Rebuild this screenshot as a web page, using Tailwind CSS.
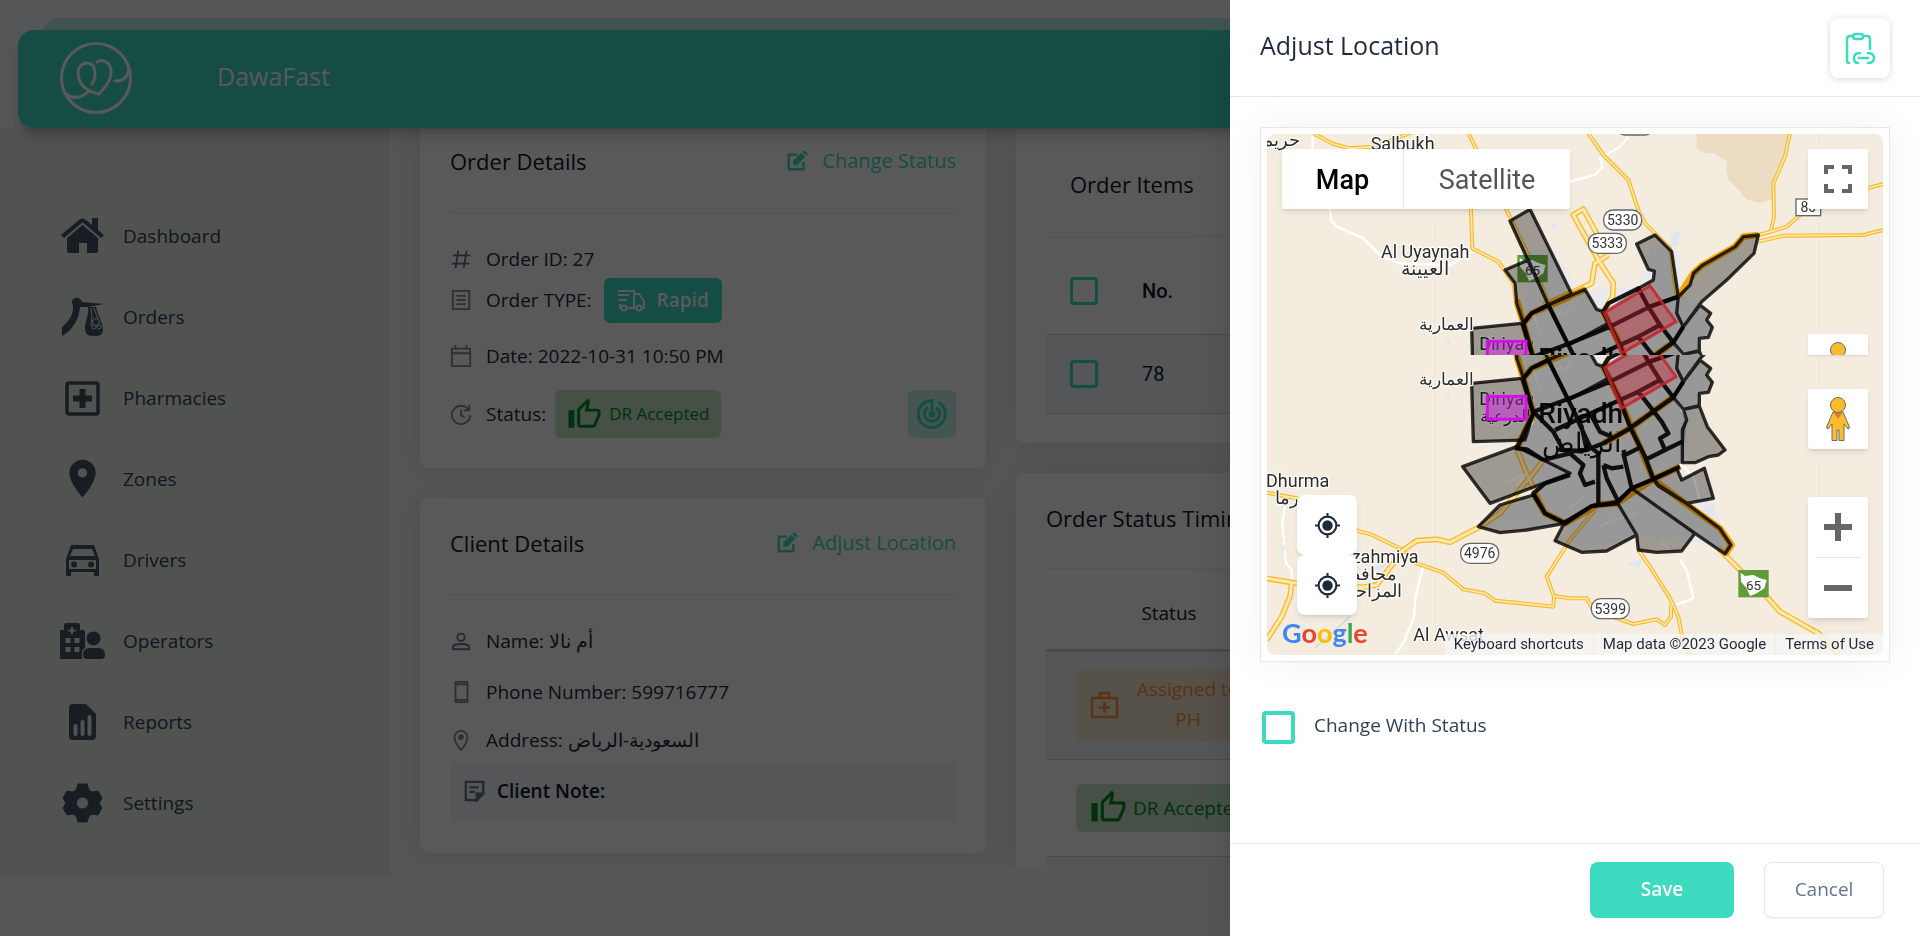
<!DOCTYPE html>
<html lang="en">
<head>
  <meta charset="UTF-8">
  <meta name="viewport" content="width=device-width, initial-scale=1">
  <title>DawaFast – Adjust Location</title>
  <script src="https://cdn.jsdelivr.net/npm/@tailwindcss/browser@4"></script>
</head>
<body class="relative h-screen overflow-hidden bg-slate-100 font-['Open_Sans','Noto_Sans',sans-serif] text-[19px] leading-6 text-slate-800">

  <!-- Shared icons -->
  <svg class="hidden">
    <symbol id="edit" viewBox="0 0 24 24"><path d="M19 13v8H3V5h9" fill="none" stroke="currentColor" stroke-width="2.6" stroke-linejoin="round"/><path d="M8 16v-4.500l8.600-8.600 4.500 4.500L12.500 16zM17.800 1.800l1-1a1.200 1.200 0 0 1 1.700 0l2.700 2.700a1.200 1.200 0 0 1 0 1.700l-1 1z" fill="currentColor"/></symbol>
    <symbol id="thumb" viewBox="0 0 24 24"><path fill="currentColor" d="M5 9v12H1V9h4m4 12a2 2 0 0 1-2-2V9c0-.55.22-1.050.59-1.410L14.170 1l1.060 1.060c.27.27.44.65.44 1.050l-.03.32L14.690 8H21a2 2 0 0 1 2 2v2c0 .26-.05.5-.14.73l-3.020 7.050C19.540 20.500 18.830 21 18 21H9m0-2h9.030L21 12v-2h-8.790l1.130-5.320L9 9.030V19Z"/></symbol>
    <symbol id="gps" viewBox="0 0 24 24"><path fill="none" stroke="currentColor" stroke-width="2" d="M12 3.500a8.500 8.500 0 1 0 0 17 8.500 8.500 0 0 0 0-17M12 0v4M12 20v4M0 12h4M20 12h4"/><circle cx="12" cy="12" r="5" fill="currentColor"/></symbol>
    <symbol id="pegman" viewBox="0 0 24 44"><path d="M7 15 1 29q-1 3 1 3l4-5v16.500h5V33h2v10.500h5V27l4 5q2 0 1-3L17 15z" fill="#fbbc2c" stroke="#6b6b6b"/><path d="M7.500 15.500h9L12 22z" fill="#e37a2b"/><circle cx="12" cy="8" r="7.500" fill="#fbbc2c" stroke="#6b6b6b"/></symbol>
  </svg>

  <!-- Header -->
  <div class="absolute left-[43px] right-[43px] top-[18px] h-20 rounded-2xl bg-[#3cdbc0]/30"></div>
  <header class="relative z-10 ml-[18px] mr-[18px] mt-[30px] flex h-[98px] items-center rounded-2xl bg-[#3cdbc0] pb-[3px] pl-[42px] shadow-lg shadow-black/20">
    <svg class="h-[73px] w-[73px]" viewBox="0 0 73 73" fill="none" stroke="#fff" stroke-width="3" stroke-linecap="round">
      <circle cx="36" cy="37" r="34.500"/>
      <path d="M32 43c5-8 4-21-5-21-12 0-12 19 1 27 4 3 7 3 11 4 6-7 13-14 12-24-1-9-10-11-14-8M29 49c-6 9-16 9-23 4M55 40c8 1 14-5 14-14"/>
    </svg>
    <h1 class="ml-[84px] pb-1 text-[25px] font-medium leading-8 text-white">DawaFast</h1>
  </header>

  <div class="flex">
    <!-- Sidebar -->
    <nav class="h-[748px] w-[390px] shrink-0 bg-[#e7ede7] pl-[60px] pt-[67px] text-slate-700">
      <a href="#" class="flex h-[81px] items-center gap-[18px]">
        <svg class="h-[45px] w-[45px]" viewBox="0 0 45 45" fill="#475569"><path d="M1 22 19 7q3.500-3 7 0l6 5V5h6v12l6 5-3 3L23.500 10q-1-1-2 0L4 25zM7 25 22.500 12 38 25v13q0 2-2 2h-9V30h-8v10h-9q-3 0-3-2z"/></svg>
        Dashboard
      </a>
      <a href="#" class="flex h-[81px] items-center gap-[18px]">
        <svg class="h-[45px] w-[45px]" viewBox="0 0 45 45" fill="#475569"><path d="M2 33C10 27 14 18 13 12q-3-6 2-8 5-1 7 4l22 2-16 3h-8C19 25 13 36 2 42zM28 13h8c2 9 7 16 7 24-1 5-5 5-10 5-6 0-8-3-8-8 0-7 4-12 3-21z"/><path d="M31 14q2 8 0 18M34 14l5 14" stroke="#e7ede7" fill="none"/><circle cx="36" cy="28" r="3.500" stroke="#e7ede7"/><circle cx="34" cy="33" r="2" stroke="#e7ede7"/><circle cx="39" cy="33" r="2" stroke="#e7ede7"/></svg>
        Orders
      </a>
      <a href="#" class="flex h-[81px] items-center gap-[18px]">
        <svg class="h-[45px] w-[45px]" viewBox="0 0 45 45"><rect x="7" y="8" width="31" height="31" rx="2" fill="none" stroke="#475569" stroke-width="3.500"/><path d="M13 23.500h19M22.500 14v19" stroke="#475569" stroke-width="6"/></svg>
        Pharmacies
      </a>
      <a href="#" class="flex h-[81px] items-center gap-[18px]">
        <svg class="h-[45px] w-[45px]" viewBox="0 0 24 24" fill="#475569"><path d="M12 11.500A2.500 2.500 0 0 1 9.500 9 2.500 2.500 0 0 1 12 6.500 2.500 2.500 0 0 1 14.500 9a2.500 2.500 0 0 1-2.500 2.500M12 2a7 7 0 0 0-7 7c0 5.250 7 13 7 13s7-7.750 7-13a7 7 0 0 0-7-7Z"/></svg>
        Zones
      </a>
      <a href="#" class="flex h-[81px] items-center gap-[18px]">
        <svg class="h-[45px] w-[45px]" viewBox="0 0 45 45"><path d="M11 8h23l5 14v17h-5v-4H11v4H6V22zM13 12 10 19h25l-3-7zM9 23v9h27v-9z" fill="#475569" fill-rule="evenodd"/><g fill="#475569"><circle cx="14" cy="27.500" r="3"/><circle cx="31" cy="27.500" r="3"/></g></svg>
        Drivers
      </a>
      <a href="#" class="flex h-[81px] items-center gap-[18px]">
        <svg class="h-[45px] w-[45px]" viewBox="0 0 45 45"><path d="M0 12h4V7q0-2 2-2h12q2 0 2 2v5h3q2 0 2 2v27H0z" fill="#475569"/><path d="M12 9v7M8.500 12.500h7" stroke="#e7ede7" stroke-width="2"/><path d="M5.500 22.500h5M14.500 22.500h5M5.500 31.500h5M14.500 31.500h5" stroke="#e7ede7" stroke-width="5"/><path d="M22 41v-5q0-7 7-7h10q7 0 7 7v5z" fill="#e7ede7"/><circle cx="33.500" cy="20.500" r="7" fill="#475569"/><path d="M23 37q0-7 7-7h8q7 0 7 7 0 4-4 4H27q-4 0-4-4z" fill="#475569"/></svg>
        Operators
      </a>
      <a href="#" class="flex h-[81px] items-center gap-[18px]">
        <svg class="h-[45px] w-[45px]" viewBox="0 0 45 45"><path d="M13 5h13l10 10v22q0 4-4 4H13q-4 0-4-4V9q0-4 4-4z" fill="#475569"/><path d="M15.500 27v8M22.500 23v12M29.500 18v17" stroke="#e7ede7" stroke-width="4" stroke-linecap="round"/></svg>
        Reports
      </a>
      <a href="#" class="flex h-[81px] items-center gap-[18px]">
        <svg class="h-[45px] w-[45px]" viewBox="0 0 45 45"><path d="M18 4h9l2 6 3 2 6-1 4 7-3 5 3 5-4 7-6-1-3 2-2 6h-9l-2-6-3-2-6 1-4-7 3-5-3-5 4-7 6 1 3-2zM22.500 17a6 6 0 1 0 0 12 6 6 0 0 0 0-12z" fill="#475569" fill-rule="evenodd" stroke="#475569" stroke-linejoin="round"/></svg>
        Settings
      </a>
    </nav>

    <!-- Page content -->
    <main class="grid h-[738px] flex-1 grid-cols-[566px_1fr] items-start gap-[30px] overflow-hidden px-[30px]">
      <div class="space-y-[30px]">
        <section class="h-[340px] rounded-b-lg bg-white px-[30px] shadow-[0_0_30px_rgba(0,0,0,0.1)]">
          <div class="flex h-[85px] items-center justify-between border-b border-slate-200 pb-[18px]">
            <h2 class="text-[22px] font-medium text-slate-900">Order Details</h2>
            <button type="button" class="flex items-center gap-[14px] text-xl leading-6 text-[#3cdbc0]"><svg class="h-[22px] w-[22px]"><use href="#edit"/></svg>Change Status</button>
          </div>
          <div class="mt-8 flex h-7 items-center gap-[14px]">
            <svg class="h-[22px] w-[22px]" viewBox="0 0 24 24" fill="none" stroke="#64748b" stroke-width="2"><path d="M9 3 6 22M18 3l-3 19M3 8h19M2 17h19"/></svg>
            Order ID: 27
          </div>
          <div class="mt-1 flex h-[46px] items-center">
            <svg class="mr-[14px] h-[22px] w-[22px]" viewBox="0 0 24 24" fill="none" stroke="#888" stroke-width="2"><path d="M3 2h18v20H3zM7 7.500h10M7 12h10M7 16.500h10"/></svg>
            Order TYPE:
            <span class="ml-3 flex h-[45px] items-center gap-3 rounded-md bg-[#3cdbc0] px-[13px] font-semibold text-white">
              <svg class="h-7 w-7" viewBox="0 0 28 28" fill="none" stroke="#fff" stroke-width="2"><path d="M1 5h16v17h-6M1 9h11M1 14h9M17 8h5l5 7v7h-2M19 22h-2M3 18v4h1"/><circle cx="7" cy="22" r="2.500"/><circle cx="22" cy="22" r="2.500"/></svg>
              Rapid
            </span>
          </div>
          <div class="mt-[19px] flex h-7 items-center gap-[14px]">
            <svg class="h-[22px] w-[22px]" viewBox="0 0 24 24" fill="none" stroke="#888" stroke-width="2"><path d="M2 4h20v19H2zM2 9h20M6 0v4M18 0v4"/></svg>
            Date: 2022-10-31 10:50 PM
          </div>
          <div class="mt-5 flex h-12 items-center">
            <svg class="mr-[14px] h-[22px] w-[22px]" viewBox="0 0 24 24" fill="none" stroke="#888" stroke-width="2"><path d="M20 7a10 10 0 1 0 2 6M21 2v6h-6M12 7v6l4 3"/></svg>
            Status:
            <span class="ml-[9px] flex h-12 items-center gap-[7px] rounded-md bg-[#c8e6cb] px-3 text-[17px] text-[#008a24]"><svg class="h-[35px] w-[35px]"><use href="#thumb"/></svg>DR Accepted</span>
            <button type="button" aria-label="Track" class="ml-auto flex h-12 w-12 items-center justify-center rounded-md bg-[#3cdbc0]/30">
              <svg class="h-[30px] w-[30px]" viewBox="0 0 30 30" fill="none" stroke="#3cdbc0" stroke-width="3"><path d="M21 3A13.500 13.500 0 1 1 15 1.500V15M19 8.500A7.500 7.500 0 1 1 11 8.500"/><circle cx="15" cy="15" r="2" fill="#3cdbc0"/></svg>
            </button>
          </div>
        </section>

        <section class="h-[355px] rounded-lg bg-white px-[30px] shadow-[0_0_30px_rgba(0,0,0,0.1)]">
          <div class="flex h-[97px] items-center justify-between border-b border-slate-200 pb-[6px]">
            <h2 class="text-[22px] font-medium text-slate-900">Client Details</h2>
            <button type="button" class="flex items-center gap-[14px] text-xl leading-6 text-[#3cdbc0]"><svg class="h-[22px] w-[22px]"><use href="#edit"/></svg>Adjust Location</button>
          </div>
          <div class="mt-8 flex h-7 items-center gap-[14px]">
            <svg class="h-[22px] w-[22px]" viewBox="0 0 24 24" fill="none" stroke="#64748b" stroke-width="2"><circle cx="12" cy="8" r="4"/><path d="M3 21v-2c0-5 18-5 18 0v2z"/></svg>
            <span>Name: <bdi>أم نالا</bdi></span>
          </div>
          <div class="mt-[23px] flex h-7 items-center gap-[14px]">
            <svg class="h-[22px] w-[22px]" viewBox="0 0 24 24" fill="none" stroke="#888" stroke-width="2"><path d="M6 1h13v22H6zM6 3.500h13M6 20.500h13"/></svg>
            Phone Number: 599716777
          </div>
          <div class="mt-5 flex h-7 items-center gap-[14px]">
            <svg class="h-[22px] w-[22px]" viewBox="0 0 24 24" fill="none" stroke="#888" stroke-width="2"><path d="M12 23S5 15 5 9a7 7 0 0 1 14 0c0 6-7 14-7 14z"/><circle cx="12" cy="9" r="2" fill="#888"/></svg>
            <span>Address: <bdi>السعودية-الرياض</bdi></span>
          </div>
          <div class="mt-2 flex h-[60px] items-center gap-3 rounded-md bg-slate-100 px-[13px] pb-[2px] font-semibold text-slate-900">
            <svg class="h-[22px] w-[22px]" viewBox="0 0 24 24" fill="none" stroke="#64748b" stroke-width="2.500"><path d="M3 2h19v13l-7 7H3zM7 8h10M7 13h6"/><path d="M22 15h-7v7z" fill="#64748b"/></svg>
            Client Note:
          </div>
        </section>
      </div>

      <div class="space-y-[30px]">
        <section class="h-[315px] rounded-b-lg bg-white pl-[30px] shadow-[0_0_30px_rgba(0,0,0,0.1)]">
          <h2 class="flex h-[109px] items-center border-b border-slate-200 pl-6 pt-1 text-[22px] font-medium text-slate-900">Order Items</h2>
          <table class="w-full border-collapse text-left font-[Roboto,sans-serif] text-xl text-slate-900">
            <tr class="h-[97px] border-b border-slate-300">
              <th class="w-[96px] pl-6 pt-3"><input type="checkbox" aria-label="Select all" class="block h-7 w-7 appearance-none rounded-sm border-3 border-[#3cdbc0]"></th>
              <th class="pt-3 font-medium">No.</th>
            </tr>
            <tr class="h-[79px] border-b border-slate-300 bg-slate-100">
              <td class="pl-6"><input type="checkbox" aria-label="Select 78" class="block h-7 w-7 appearance-none rounded-sm border-3 border-[#3cdbc0]"></td>
              <td>78</td>
            </tr>
          </table>
        </section>
        <section class="h-[500px] rounded-lg bg-white pl-[30px] shadow-[0_0_30px_rgba(0,0,0,0.1)]">
          <h2 class="flex h-[97px] items-center border-b border-slate-200 pb-[6px] text-[22px] font-medium text-slate-900">Order Status Timing</h2>
          <table class="w-full border-collapse">
            <tr class="h-[80px] border-b-3 border-slate-300 text-slate-900">
              <th class="w-[246px] pt-2 font-medium">Status</th><th></th>
            </tr>
            <tr class="h-[109px] border-b border-slate-300 bg-slate-100">
              <td class="pl-[30px]"><span class="flex h-[72px] items-center rounded-md bg-[#f5e7d0] pl-[14px] text-[#fb923c]">
                <svg class="h-[30px] w-[30px]" viewBox="0 0 30 30" fill="none" stroke="currentColor" stroke-width="2.500"><path d="M2 8h25v19H2zM10 8V3h9v5M14.500 12v11M9 17.500h11" stroke-linejoin="round"/></svg>
                <span class="grow pb-[2px] pr-9 text-center leading-[30px]">Assigned to<br>PH</span></span></td><td></td>
            </tr>
            <tr class="h-[97px] border-b border-slate-300">
              <td class="pl-[30px]"><span class="flex h-12 items-center gap-[6px] rounded-md bg-[#c8e6cb] pl-[14px] whitespace-nowrap text-[#008a24]"><svg class="h-[37px] w-[37px]"><use href="#thumb"/></svg>DR Accepted</span></td><td></td>
            </tr>
            <tr class="h-[79px] bg-slate-100"><td></td><td></td></tr>
          </table>
        </section>
      </div>
    </main>
  </div>

  <!-- Backdrop -->
  <div class="fixed inset-0 z-20 bg-black/65"></div>

  <!-- Drawer -->
  <aside class="fixed inset-y-0 right-0 z-30 flex w-[690px] flex-col bg-white shadow-2xl">
    <div class="flex h-[97px] items-center justify-between border-b border-slate-200 px-[30px]">
      <h2 class="pb-[6px] text-[25px] font-medium leading-8">Adjust Location</h2>
      <button type="button" aria-label="Paste link" class="flex h-[60px] w-[60px] items-center justify-center rounded-lg text-[#3cdbc0] shadow-[0_1px_6px_rgba(0,0,0,0.16)]">
        <svg class="h-8 w-8" viewBox="0 0 32 32" fill="none" stroke="currentColor" stroke-width="2.500" stroke-linecap="round"><path d="M5 31q-2 0-2-3V7q0-3 3-3h3M19 4h4q3 0 3 3v10"/><rect x="9" y="2" width="10" height="5" rx="2.500"/><path d="M16 21q-6 0-6 5t4 5M24 21q6 0 6 5t-6 5M15 26h9"/></svg>
      </button>
    </div>

    <div class="grow px-[30px] pt-[30px]">
      <div class="border border-gray-200 bg-white p-[6px] shadow-[0_0_40px_rgba(0,0,0,0.06)]">
        <div class="relative h-[521px] overflow-hidden rounded-lg bg-[#f4eddf] font-[Roboto,sans-serif]">
          <svg class="h-full w-full" viewBox="51 -648 1848 1563" preserveAspectRatio="xMidYMid slice">
            <defs>
              <clipPath id="upper"><rect x="0" y="-650" width="1950" height="665"/></clipPath>
              <clipPath id="lower"><rect x="0" y="15" width="1950" height="950"/></clipPath>
              <g id="roads" fill="none" stroke-linejoin="round">
                <path d="M190-485 250-453 300-440 370-445 440-470 490-490M655-485 690-415 770-255 835-120 900 30M663-350V-255L667-140 745-100 790-35 800 35 820 85M1015-485 1060-420 1135-345 1165-255 1185-215 1260-140 1280 0M1620-485 1605-415 1570-335 1572-235 1563-195M1525-180 1563-190 1610-205 1650-240 1720-295 1850-320 1900-333M1525-160 1600-178 1840-180 1900-195M50 428 140 445 330 545 360 552 460 600 500 640 580 668 640 718 705 730 735 752 910 770 912 738 960 745H1010L1030 780 1150 822 1220 808 1245 825 1263 800V765M1035 480 960 570 890 680 912 740M1165 600 1200 650 1260 745 1285 800 1300 880 1320 915"/>
              </g>
              <g id="highways" fill="none" stroke-linejoin="round">
                <path d="M1075-120 1000-258 970-240 1045-105 1090-35 1088 5 1060 50M1075-120 1035-95 1025-35 960-5 880 30M50 685 140 700 340 712 380 705 460 600 500 572 560 568 600 577 690 530 750 490 850 370 880 330M125 700 120 740 95 800 50 870M800 295 830 370 885 490M1405 595 1470 660 1550 740 1590 785 1705 850 1765 912"/>
              </g>
              <g id="zones" stroke-linejoin="round">
                <g fill="#000" fill-opacity=".35" stroke="#000" stroke-opacity=".8" stroke-width="10">
                  <path d="M780-222 840-257 965-3 895 30zM765-75 835-105 895 30 845 55 820 85 800 25 795-35zM895 30 1005-17 1040 43 1060 50 1075 85 955 150zM1160-153 1215-180 1265-130 1285 5 1195 35 1165-20 1210-45 1213-72 1195-77zM1285 5 1320-30 1330-65 1355-88 1455-145 1480-175 1525-180 1512-125 1430-45 1355 20 1300 95 1280 55zM1350 30 1382 55 1370 75 1387 97 1375 127 1348 130V167L1300 178 1270 142 1300 95zM1300 178 1348 168 1372 230 1425 300 1405 315 1375 320 1335 338H1297V240L1310 210zM1280 355 1295 390 1363 355 1390 445 1310 460 1225 405 1210 385zM1145 415 1210 388 1225 408 1310 460 1410 535 1443 585 1425 612 1335 550zM1100 455 1145 415 1335 550 1295 603 1220 607 1165 600 1160 555zM945 515 1025 468 1100 455 1160 555 1070 603 995 607 915 572zM685 530 750 465 850 435 885 490 945 520 830 540 750 548zM638 350 800 290 960 370 720 460zM665 100 815 85 850 190 825 270 670 275z"/>
                </g>
                <path d="M820 85 895 30 955 150 1075 85 1060 50 1165-20 1195 35 1285 5 1280 55 1300 95 1270 142 1310 210 1297 338 1210 388 1145 415 1100 455 1025 468 945 520 885 490 850 430 885 400 960 375 880 330 800 295 850 220V190z" fill-opacity=".35"/>
                <path d="M895 30 955 150 995 230 1010 300M820 85 850 190 800 295 830 298 880 330M820 85 845 55 895 30M850 185 960 145 1080 95 1200 35 1285 5M855 190 880 215 910 245 940 300 1000 305M915 240 1000 200 1110 150 1165 125 1230 90M1060 50 1075 25 1165-20 1195 35 1230 90 1270 142M1060 50 1110 150 1140 230 1185 320 1210 388M940 305 1010 300 1060 280 1140 235 1270 142 1300 95M1165 125 1235 215 1255 250 1230 265 1245 300M1185 330 1245 300 1297 275M985 215 1020 290 1045 310V460M1060 345 1085 355 1120 350M1120 300 1125 315 1165 295M1060 345 1070 385 1105 455M1120 310 1145 415M880 330 960 310 1000 345 990 370 1005 405 1035 395M1020 190 1050 245 1085 260M960 375 885 400 850 430 885 490 945 520 1025 468 1100 460 1145 415 1210 388 1290 350" fill="none" stroke="#000" stroke-opacity=".9" stroke-width="13"/>
              </g>
              <g id="map">
                <path d="M1340-485 1340-440 1360-425H1390L1432-400 1428-380 1435-345 1465-315 1490-287 1530-275 1565-287 1568-335 1605-415 1620-485z" fill="#ecdcc2"/>
                <path d="M820 85 840-130 910-140 990-10 1165-30 1210-160 1290-130 1290 0 1350 20 1380 90 1330 180 1300 350 1400 480 1420 590 1160 560 1000 600 950 530 700 530 850 430 800 300z" fill="#e7e9ee" opacity=".85"/>
                <path d="M1260-180 1290-195 1285-150 1260-140zM900-220 925-210 910-195z" fill="#e2e6ee"/>
                <path d="M188-485V-400L240-255 245-220 260-205 340-170 395-115 450-95 600-90 665-130M1135-475 1110-445 1050-410 1058-385 1035-360 920-330M105 470 97 520 108 640 125 660V700M520 645 497 740 492 800 460 880 435 912M1290 628 1310 660 1330 745 1275 765M1290 340 1330 380 1350 450" fill="none" stroke="#fff" stroke-width="7"/>
                <path d="M195 893 300 800 280 740" fill="none" stroke="#d5d5d8" stroke-width="4"/>
                <path d="M556-485V915M1708-485V915M50 570H1900" fill="none" stroke="#ebe6d9" stroke-width="2"/>
                <path d="M585 140 602 128 600 155zM90 590l18-5-5 20zM370 650l40-10-20 30zM1130 640l50-15-15 30zM1350 480l40-20 5 30-20 10z" fill="#e2e6ee"/>
                <use href="#roads" stroke="#fbb829" stroke-width="12"/><use href="#roads" stroke="#ffe9b0" stroke-width="5"/>
                <use href="#highways" stroke="#fbb829" stroke-width="17"/><use href="#highways" stroke="#ffe9b0" stroke-width="9"/>
                <g id="shield65"><rect x="1465" y="660" width="91" height="82" fill="#629c3a"/><path d="M1472 668 1485 678 1510 675 1530 685 1550 690 1543 715 1520 730 1500 738 1490 715 1473 695z" fill="#fff"/><text x="1488" y="720" font-size="40" fill="#333">65</text></g>
                <use href="#shield65" x="-663" y="-780"/>
                <path d="M940 60 960 45M850 60 870 115M920 60 935 50M1080 120 1200 65M1000 440 960 475M770 400 830 370 800 410M1050 530 1090 510 1160 490M1230 570 1260 600" fill="none" stroke="#fff" stroke-opacity=".6" stroke-width="5"/>
                <g fill="#2b2b2b" stroke="#fff" stroke-width="7" stroke-linejoin="round" paint-order="stroke" font-size="54">
                  <text x="688" y="165">Diriyah</text><text x="766" y="215" text-anchor="middle" font-size="52">الدرعية</text>
                </g>
                <g fill="#111" font-weight="500"><text x="865" y="220" font-size="84">Riyadh</text><text x="995" y="305" text-anchor="middle" font-size="82" font-weight="400">الرياض</text></g>
                <g fill="none" stroke="#f5a80c" stroke-width="20" stroke-linejoin="round"><path d="M800 15 820 85 850 190 800 295M895 30 1005-17M820 85 845 55 960 5M1060 50 1110 150 1210 388M850 430 885 490 945 520 1045 463 1100 460 1210 388 1290 350M1210 388 1310 463 1410 535 1445 585 1425 614M1060 280 1140 235 1270 142M1285 5 1330-65 1355-88 1455-145 1480-175 1525-180"/></g>
                <use href="#zones"/>
                <path d="M712 139H828V208H712z" fill="#d419e4" fill-opacity=".45" stroke="#d60fe6" stroke-width="9"/>
                <path d="M1063 53 1200-28 1278 80 1115 175z" fill="#c8202f" fill-opacity=".38" stroke="#c4252e" stroke-opacity=".85" stroke-width="9"/>
                <g fill="#2b2b2b" stroke="#fff" stroke-width="7" stroke-linejoin="round" paint-order="stroke" font-size="54">
                  <text x="92" y="-447" text-anchor="middle" font-size="54">حريم</text>
                  <text x="362" y="-435">Salbukh</text>
                  <text x="393" y="-110">Al Uyaynah</text><text x="524" y="-60" text-anchor="middle" font-size="56">العيينة</text>
                  <text x="590" y="105" text-anchor="middle" font-size="52">العمارية</text>
                  <text x="48" y="410">Dhurma</text><text x="135" y="462" text-anchor="middle" font-size="54">ضرما</text>
                  <text x="506" y="638" text-anchor="end">Al Muzahmiya</text><text x="350" y="690" text-anchor="middle" font-size="54">محافظة</text><text x="350" y="742" text-anchor="middle" font-size="54">المزاحمية</text>
                  <text x="490" y="872">Al Awsat</text>
                </g>
                <g fill="#fff" stroke="#666" stroke-width="4">
                  <rect x="1061" y="-255" width="114" height="60" rx="28"/><rect x="1015" y="-185" width="114" height="60" rx="28"/><rect x="632" y="580" width="114" height="60" rx="28"/><rect x="1024" y="746" width="114" height="60" rx="28"/><rect x="1098" y="-540" width="114" height="60" rx="28"/><rect x="1638" y="-288" width="74" height="50"/>
                </g>
                <g fill="#333" font-size="42" text-anchor="middle"><text x="1118" y="-210">5330</text><text x="1072" y="-140">5333</text><text x="689" y="625">4976</text><text x="1081" y="791">5399</text><text x="1675" y="-248">80</text></g>
              </g>
            </defs>
            <g clip-path="url(#upper)"><use href="#map" y="-165"/></g>
            <g clip-path="url(#lower)"><use href="#map"/></g>
          </svg>

          <div class="absolute left-[15px] top-[15px] flex h-[60px] overflow-hidden rounded-[3px] bg-white text-[27px] shadow-md">
            <button type="button" class="w-[122px] border-r border-gray-200 pt-[2px] font-medium text-black">Map</button>
            <button type="button" class="w-[166px] pt-[2px] text-[#565656]">Satellite</button>
          </div>
          <button type="button" aria-label="Toggle fullscreen" class="absolute right-[15px] top-[15px] flex h-[60px] w-[60px] items-center justify-center rounded-[3px] bg-white shadow-md">
            <svg class="h-7 w-7" viewBox="0 0 28 28" fill="none" stroke="#666" stroke-width="4"><path d="M2 9V2h8M18 2h8v7M26 19v7h-8M10 26H2v-7"/></svg>
          </button>
          <div class="absolute right-[15px] top-[200px] flex h-[21px] w-[60px] justify-center overflow-hidden rounded-t-[3px] bg-white pt-2 shadow-sm"><svg class="h-11 w-6 shrink-0"><use href="#pegman"/></svg></div>
          <button type="button" aria-label="Street View" class="absolute right-[15px] top-[255px] flex h-[60px] w-[60px] items-center justify-center rounded-[3px] bg-white shadow-md"><svg class="h-11 w-6"><use href="#pegman"/></svg></button>
          <div class="absolute right-[15px] top-[363px] w-[60px] rounded-[3px] bg-white px-2 shadow-md">
            <button type="button" aria-label="Zoom in" class="flex h-[61px] w-full items-center justify-center border-b border-gray-200"><svg class="h-7 w-7" viewBox="0 0 28 28" stroke="#666" stroke-width="6"><path d="M0 14h28M14 0v28"/></svg></button>
            <button type="button" aria-label="Zoom out" class="flex h-[60px] w-full items-center justify-center"><svg class="h-7 w-7" viewBox="0 0 28 28" stroke="#666" stroke-width="6"><path d="M0 14h28"/></svg></button>
          </div>
          <div class="absolute left-[30px] top-[361px] text-slate-800">
            <button type="button" aria-label="My location" class="flex h-[60px] w-[60px] items-center justify-center rounded-lg bg-white shadow-md"><svg class="h-[25px] w-[25px]"><use href="#gps"/></svg></button>
            <button type="button" aria-label="Client location" class="flex h-[60px] w-[60px] items-center justify-center rounded-lg bg-white shadow-md"><svg class="h-[25px] w-[25px]"><use href="#gps"/></svg></button>
          </div>
          <div class="absolute bottom-[6px] left-[15px] font-[Lato,sans-serif] text-[27px] font-bold leading-8"><span class="text-[#4285f4]">G</span><span class="text-[#ea4335]">o</span><span class="text-[#fbbc05]">o</span><span class="text-[#4285f4]">g</span><span class="text-[#34a853]">l</span><span class="text-[#ea4335]">e</span></div>
          <div class="absolute bottom-0 right-0 flex h-[21px] whitespace-nowrap text-[15px] leading-[21px] text-gray-800">
            <button type="button" class="bg-neutral-100/80 px-[9px]">Keyboard shortcuts</button>
            <span class="ml-px bg-neutral-100/80 px-[9px]">Map data ©2023 Google</span>
            <a href="#" class="ml-px bg-neutral-100/80 px-[9px]">Terms of Use</a>
          </div>
        </div>
      </div>

      <div class="mt-[49px] flex items-center gap-[19px] pl-[2px] text-slate-700">
        <input id="withStatus" type="checkbox" class="h-[33px] w-[33px] appearance-none rounded-sm border-4 border-[#3cdbc0]">
        <label for="withStatus" class="pb-[6px]">Change With Status</label>
      </div>
    </div>

    <div class="flex h-[93px] items-start justify-end gap-[30px] border-t border-slate-200 pr-9 pt-[18px]">
      <button type="button" class="h-14 w-36 rounded-lg bg-[#3cdbc0] pb-[2px] font-semibold text-white">Save</button>
      <button type="button" class="h-14 w-[120px] rounded-lg border border-slate-200 pb-[2px] font-medium text-slate-500 shadow-xs">Cancel</button>
    </div>
  </aside>
</body>
</html>
